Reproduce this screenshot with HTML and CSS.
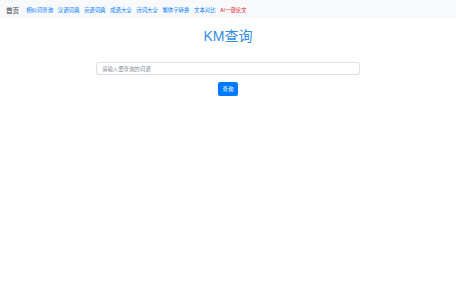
FILE: index.html
```html
<!DOCTYPE html>
<html lang="zh">
<head>
  <meta charset="UTF-8" />
  <meta name="viewport" content="width=device-width, initial-scale=1.0"/>
  <title>KM查询</title>
  <link rel="stylesheet" href="styles.css">
</head>
<body>

  <!-- Top Navigation -->
  <nav class="navbar">
    <a class="brand" href="#">首页</a>
    <div class="nav-links">
      <a href="#">相似词查询</a>
      <a href="#">汉语词典</a>
      <a href="#">英语词典</a>
      <a href="#">成语大全</a>
      <a href="#">诗词大全</a>
      <a href="#">繁体字转换</a>
      <a href="#">文本对比</a>
      <a href="#" class="hot">AI一键论文</a>
    </div>
  </nav>

  <div class="container">
    <h1>KM查询</h1>

    <form class="search-form">
      <input type="text" class="search-input" placeholder="请输入要查询的词语" />
      <button type="submit" class="search-btn">查询</button>
    </form>
  </div>

</body>
</html>
```

FILE: styles.css
```css
body {
  margin: 0;
  padding: 0;
  font-family: "Noto Sans CJK SC", "Liberation Sans", sans-serif;
  background: #fff;
  color: #212529;
}

/* Navbar */
.navbar {
  display: flex;
  align-items: center;
  height: 19px;
  padding: 0 6px;
  background-color: #f8f9fa;
}

.brand {
  font-size: 6.6px;
  color: #343a40;
  text-decoration: none;
  margin-right: 7px;
}

.nav-links {
  display: flex;
  gap: 4.6px;
}

.nav-links a {
  font-size: 5.4px;
  color: #007bff;
  text-decoration: none;
}

.nav-links a.hot {
  color: #e3262f;
}

/* Main */
.container {
  width: 264px;
  margin: 0 auto;
}

h1 {
  text-align: center;
  font-family: "Liberation Sans", "Noto Sans CJK SC", sans-serif;
  font-size: 14px;
  line-height: 20px;
  font-weight: normal;
  color: #2f8de4;
  margin: 7px 0 16px;
}

.search-form {
  display: flex;
  flex-direction: column;
  align-items: center;
}

.search-input {
  width: 100%;
  height: 13px;
  box-sizing: border-box;
  padding: 0 5px;
  border: 1px solid #dde1e5;
  border-radius: 2px;
  font-size: 5.4px;
  font-family: inherit;
  outline: none;
}

.search-input::placeholder {
  color: #868e96;
}

.search-btn {
  margin-top: 7px;
  width: 20px;
  height: 14px;
  padding: 0;
  border: none;
  border-radius: 2px;
  background-color: #007bff;
  color: #fff;
  font-size: 5.4px;
  font-family: inherit;
  cursor: pointer;
}
```
